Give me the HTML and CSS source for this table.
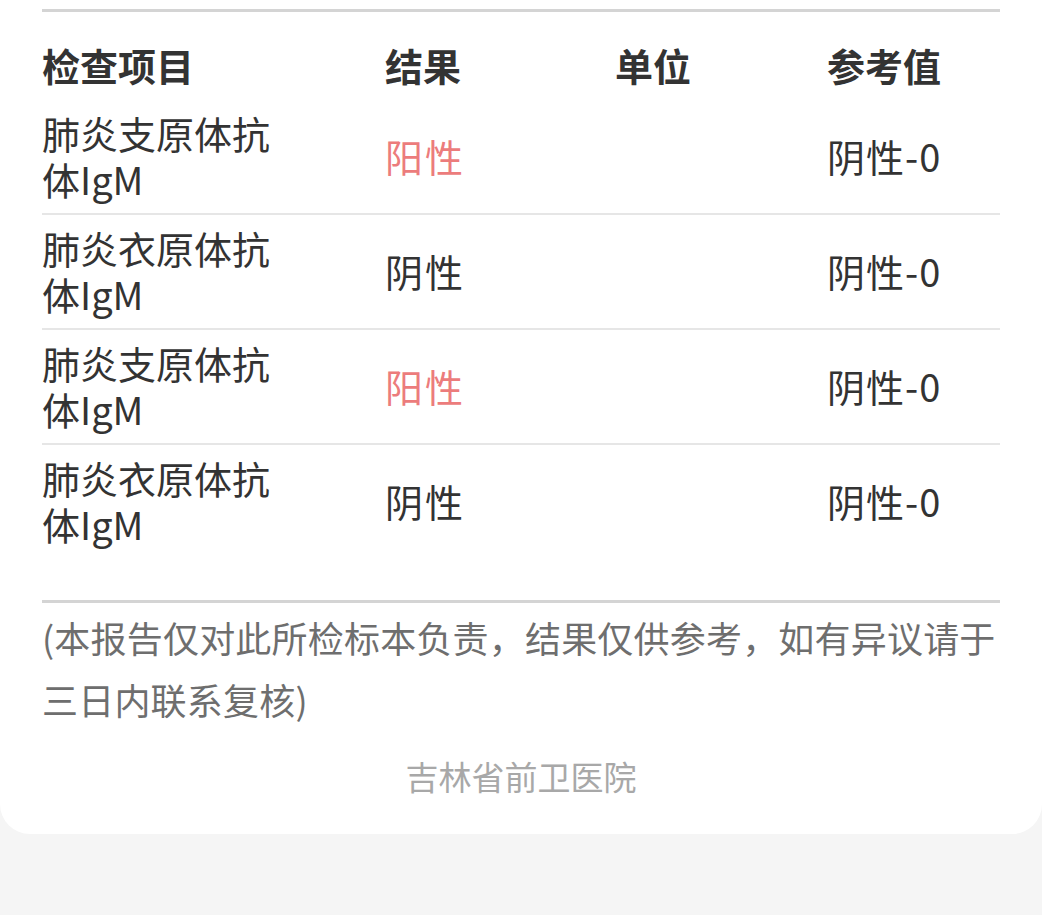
FILE: index.html
```html
<!DOCTYPE html>
<html lang="zh-CN">
<head>
<meta charset="utf-8">
<title>检验报告</title>
<link rel="stylesheet" href="styles.css">
</head>
<body>
<div class="card">
  <div class="rule"></div>
  <div class="table">
    <div class="row head">
      <div class="cell name">检查项目</div>
      <div class="cell">结果</div>
      <div class="cell">单位</div>
      <div class="cell">参考值</div>
    </div>
    <div class="row item">
      <div class="cell name">肺炎支原体抗体IgM</div>
      <div class="cell pos">阳性</div>
      <div class="cell"></div>
      <div class="cell ref">阴性-0</div>
    </div>
    <div class="row item">
      <div class="cell name">肺炎衣原体抗体IgM</div>
      <div class="cell res">阴性</div>
      <div class="cell"></div>
      <div class="cell ref">阴性-0</div>
    </div>
    <div class="row item">
      <div class="cell name">肺炎支原体抗体IgM</div>
      <div class="cell pos">阳性</div>
      <div class="cell"></div>
      <div class="cell ref">阴性-0</div>
    </div>
    <div class="row item last">
      <div class="cell name">肺炎衣原体抗体IgM</div>
      <div class="cell res">阴性</div>
      <div class="cell"></div>
      <div class="cell ref">阴性-0</div>
    </div>
  </div>
  <div class="rule bottom"></div>
  <p class="note">(本报告仅对此所检标本负责，结果仅供参考，如有异议请于三日内联系复核)</p>
  <p class="hospital">吉林省前卫医院</p>
</div>
</body>
</html>
```

FILE: styles.css
```css
html, body {
  margin: 0;
  padding: 0;
  background: #f5f5f5;
}
body {
  font-family: "Noto Sans CJK SC", "Noto Sans", sans-serif;
  color: #333;
  width: 1042px;
  height: 915px;
  overflow: hidden;
}
.card {
  background: #fff;
  border-radius: 0 0 30px 30px;
  padding: 9px 42px 35px;
}
.rule {
  height: 3px;
  background: #d4d4d4;
}
.row {
  display: grid;
  grid-template-columns: 343px 230px 212px 1fr;
  align-items: center;
}
.cell {
  font-size: 38px;
  line-height: 46px;
}
.name {
  padding-right: 90px;
}
.head {
  padding: 30px 0 12px;
}
.head .cell {
  font-weight: 700;
  color: #333;
}
.item {
  padding: 10px 0 11px;
  border-bottom: 2px solid #e6e6e6;
}
.item.last {
  border-bottom-color: transparent;
}
.pos, .res {
  letter-spacing: 2px;
}
.ref {
  letter-spacing: 1px;
}
.pos {
  color: #ec7c7c;
}
.bottom {
  margin-top: 40px;
}
.note {
  margin: 3px 0 0;
  font-size: 36px;
  letter-spacing: 0.2px;
  line-height: 62px;
  color: #6e6e6e;
}
.hospital {
  margin: 23px 0 0;
  text-align: center;
  font-size: 33px;
  line-height: 46px;
  color: #a8a8a8;
}
```
